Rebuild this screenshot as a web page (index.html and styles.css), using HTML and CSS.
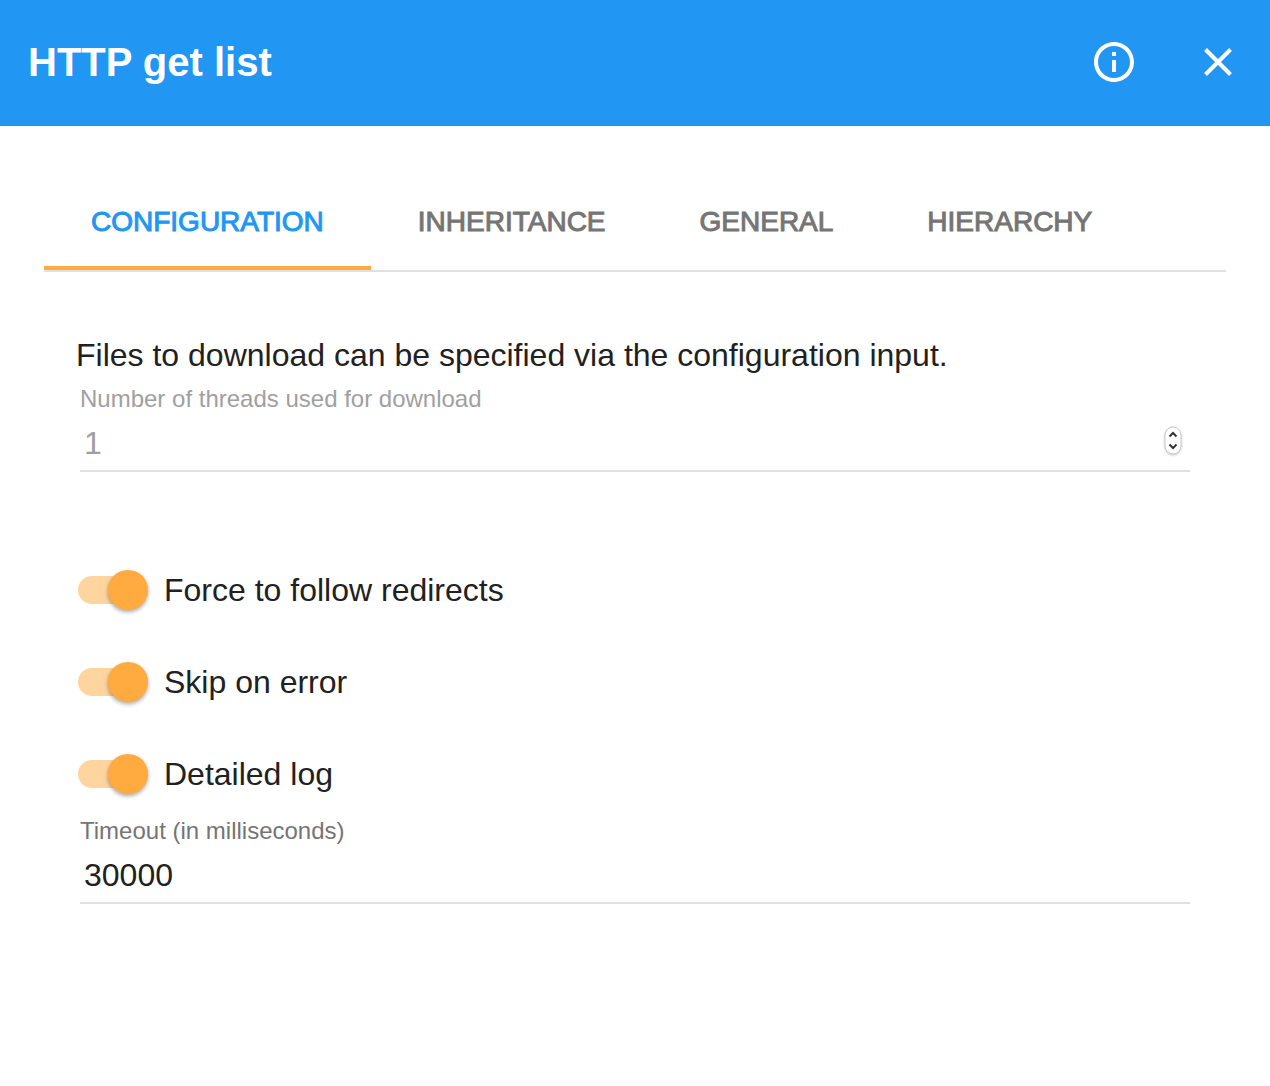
FILE: index.html
```html
<!DOCTYPE html>
<html lang="en">
<head>
  <meta charset="utf-8">
  <meta name="viewport" content="width=device-width, initial-scale=1">
  <title>HTTP get list</title>
  <link rel="stylesheet" href="styles.css">
</head>
<body>
  <header class="toolbar">
    <h1 class="toolbar-title">HTTP get list</h1>
    <div class="toolbar-actions">
      <button class="icon-button" type="button" aria-label="Information">
        <svg viewBox="0 0 24 24" aria-hidden="true"><path fill="currentColor" d="M11 17h2v-6h-2v6zm1-15C6.480 2 2 6.480 2 12s4.480 10 10 10 10-4.480 10-10S17.520 2 12 2zm0 18c-4.410 0-8-3.590-8-8s3.590-8 8-8 8 3.590 8 8-3.590 8-8 8zM11 9h2V7h-2v2z"/></svg>
      </button>
      <button class="icon-button" type="button" aria-label="Close">
        <svg viewBox="0 0 48 48" aria-hidden="true"><path fill="none" stroke="currentColor" stroke-width="4" d="M11.500 11.500l25 25M36.500 11.500l-25 25"/></svg>
      </button>
    </div>
  </header>

  <main class="panel">
    <div class="tabs" role="tablist">
      <button class="tab tab-active" type="button" role="tab" aria-selected="true">CONFIGURATION</button>
      <button class="tab" type="button" role="tab" aria-selected="false">INHERITANCE</button>
      <button class="tab" type="button" role="tab" aria-selected="false">GENERAL</button>
      <button class="tab" type="button" role="tab" aria-selected="false">HIERARCHY</button>
    </div>

    <form class="content">
      <p class="hint">Files to download can be specified via the configuration input.</p>

      <div class="field field-disabled">
        <label class="field-label" for="threads">Number of threads used for download</label>
        <div class="field-row">
          <input class="field-input" id="threads" type="number" value="1" disabled>
          <svg class="stepper" viewBox="0 0 18 34" aria-hidden="true">
            <rect x="1" y="1" width="16" height="27" rx="8" fill="#fff" stroke="#c8c8c8"/>
            <path d="M5.500 10.500L9 7l3.500 3.500M5.500 18.500L9 22l3.500-3.500" fill="none" stroke="#333" stroke-width="2"/>
          </svg>
        </div>
      </div>

      <div class="switches">
        <label class="switch-row"><input class="switch" type="checkbox" role="switch" checked>Force to follow redirects</label>
        <label class="switch-row"><input class="switch" type="checkbox" role="switch" checked>Skip on error</label>
        <label class="switch-row"><input class="switch" type="checkbox" role="switch" checked>Detailed log</label>
      </div>

      <div class="field">
        <label class="field-label" for="timeout">Timeout (in milliseconds)</label>
        <div class="field-row">
          <input class="field-input" id="timeout" type="text" inputmode="numeric" value="30000">
        </div>
      </div>
    </form>
  </main>
</body>
</html>
```
FILE: styles.css
```css
* {
  box-sizing: border-box;
}

body {
  margin: 0;
  background: #fff;
  color: #212121;
  font: 32px/40px "Liberation Sans", Arial, sans-serif;
}

button,
input {
  margin: 0;
  border: 0;
  background: none;
  color: inherit;
  font: inherit;
}

.toolbar {
  display: flex;
  align-items: center;
  justify-content: space-between;
  min-height: 126px;
  padding: 0 28px 2px;
  background: #2196f3;
  color: #fff;
}

.toolbar-title {
  margin: 0;
  font-size: 40px;
  line-height: 48px;
}

.toolbar-actions {
  display: flex;
  gap: 56px;
}

.icon-button {
  width: 48px;
  height: 48px;
  padding: 0;
}

.icon-button svg {
  display: block;
}

.panel {
  padding: 48px 44px;
}

.tabs {
  display: flex;
  border-bottom: 2px solid #e0e0e0;
}

.tab {
  padding: 32px 47px 28px;
  border-bottom: 4px solid transparent;
  color: #757575;
  font-size: 28px;
  line-height: 32px;
  -webkit-text-stroke: 1px currentColor;
}

.tab-active {
  border-bottom-color: #ffab40;
  color: #2196f3;
}

.content {
  padding: 63px 32px 0;
}

.hint {
  margin: 0 0 8px;
}

.field {
  margin: 0 4px;
}

.field-label {
  display: block;
  color: #757575;
  font-size: 24px;
  line-height: 32px;
}

.field-row {
  display: flex;
  align-items: center;
  height: 57px;
  padding: 0 8px 0 4px;
  border-bottom: 2px solid #e0e0e0;
}

.field-input {
  flex: 1;
  min-width: 0;
  padding: 0;
  outline: 0;
  appearance: textfield;
}

.field-disabled .field-label,
.field-disabled .field-input {
  color: #a0a0a0;
}

.stepper {
  width: 18px;
  height: 34px;
  filter: drop-shadow(0 1px 1px rgba(0, 0, 0, 0.2));
}

.switches {
  display: flex;
  flex-direction: column;
  align-items: flex-start;
  gap: 32px;
  margin: 88px 0 11px;
}

.switch-row {
  display: flex;
  align-items: center;
  gap: 16px;
  min-height: 60px;
}

.switch {
  display: grid;
  flex: none;
  align-items: center;
  width: 72px;
  height: 40px;
  appearance: none;
}

.switch::before,
.switch::after {
  content: "";
  grid-area: 1 / 1;
}

.switch::before {
  width: 68px;
  height: 28px;
  margin-left: 2px;
  border-radius: 14px;
  background: #bdbdbd;
}

.switch::after {
  width: 40px;
  height: 40px;
  border-radius: 50%;
  background: #fafafa;
  box-shadow: 0 2px 4px rgba(0, 0, 0, 0.35);
}

.switch:checked::before {
  background: #ffd59f;
}

.switch:checked::after {
  justify-self: end;
  background: #ffab40;
}
```
